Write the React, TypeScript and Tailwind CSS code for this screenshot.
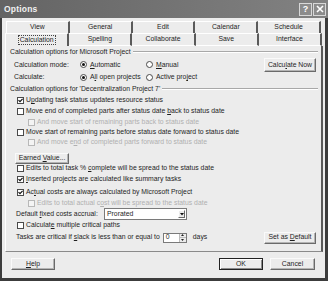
import React from "react";

const Check = ({ on, disabled }: { on?: boolean; disabled?: boolean }) => (
  <div
    className={`w-[7px] h-[7px] shrink-0 border flex items-center justify-center ${
      disabled ? "border-[#b8b8b8] bg-[#f4f4f4]" : "border-[#4a4a4a] bg-white"
    }`}
  >
    {on && (
      <svg width="5" height="5" viewBox="0 0 5 5">
        <path d="M0.5 2.2 L2 3.7 L4.6 0.8" stroke="#111" strokeWidth="1.2" fill="none" />
      </svg>
    )}
  </div>
);

const Radio = ({ on }: { on?: boolean }) => (
  <div className="w-[7px] h-[7px] shrink-0 rounded-full border border-[#4a4a4a] bg-white flex items-center justify-center">
    {on && <div className="w-[3px] h-[3px] rounded-full bg-[#111]" />}
  </div>
);

const Btn = ({
  children,
  className = "",
  def,
}: {
  children: React.ReactNode;
  className?: string;
  def?: boolean;
}) => (
  <div
    className={`flex items-center justify-center bg-[#ececec] ${
      def
        ? "border border-[#222] shadow-[inset_1px_1px_0_#fff,inset_-1px_-1px_0_#8a8a8a]"
        : "border border-t-[#fafafa] border-l-[#fafafa] border-b-[#6a6a6a] border-r-[#6a6a6a] shadow-[inset_-1px_-1px_0_#b4b4b4]"
    } ${className}`}
  >
    <span className="whitespace-nowrap">{children}</span>
  </div>
);

const CbRow = ({
  h,
  on,
  disabled,
  indent,
  children,
}: {
  h: string;
  on?: boolean;
  disabled?: boolean;
  indent?: boolean;
  children: React.ReactNode;
}) => (
  <div className={`flex items-center gap-[2px] ${h} ${indent ? "pl-[22px]" : "pl-[11px]"}`}>
    <Check on={on} disabled={disabled} />
    <span className={`whitespace-nowrap ${disabled ? "text-[#b0b0b0]" : ""}`}>{children}</span>
  </div>
);

const Header = ({ h, children }: { h: string; children: React.ReactNode }) => (
  <div className={`flex items-center ${h} pl-[4px] pr-[3px]`}>
    <span className="whitespace-nowrap">{children}</span>
    <div className="flex-1 ml-[2px] border-t border-t-[#a8a8a8] border-b border-b-white" />
  </div>
);

const Tab = ({ children, first }: { children: React.ReactNode; first?: boolean }) => (
  <div
    className={`flex-1 flex items-center justify-center border-t border-t-white border-r-2 border-r-[#5a5a5a] ${
      first ? "border-l border-l-white" : ""
    }`}
  >
    {children}
  </div>
);

const Tab2 = ({ children }: { children: React.ReactNode }) => (
  <div className="flex-1 flex items-center justify-center border-t border-t-white border-b border-b-white border-r-2 border-r-[#5a5a5a]">
    {children}
  </div>
);

export default function App() {
  return (
    <div className="w-[328px] h-[281px] flex flex-col bg-[#3c3c3c] font-['Liberation_Sans',Arial,sans-serif] text-[6.85px] text-[#1e1e1e] overflow-hidden">
      {/* Title bar */}
      <div className="h-[18px] shrink-0 flex items-center bg-gradient-to-r from-[#646464] to-[#828282] pl-[4px] pr-[2px]">
        <span className="text-[8.5px] font-bold text-[#f2f2f2] tracking-[0.2px]">Options</span>
        <div className="flex-1" />
        <div className="flex gap-[1px]">
          <div className="w-[13px] h-[13px] border border-[#d8d8d8] bg-[#8c8c8c] flex items-center justify-center text-white text-[9px] font-bold leading-none">
            ?
          </div>
          <div className="w-[13px] h-[13px] border border-[#d8d8d8] bg-[#8c8c8c] flex items-center justify-center">
            <svg width="8" height="8" viewBox="0 0 8 8">
              <path d="M1 1 L7 7 M7 1 L1 7" stroke="#fff" strokeWidth="1.6" />
            </svg>
          </div>
        </div>
      </div>

      {/* Body */}
      <div className="flex-1 flex flex-col bg-[#ececec] ml-[2px] mr-[3px] mb-[3px]">
        {/* Tabs */}
        <div className="mt-[3px] ml-[4px] mr-[4px] h-[12px] flex">
          <Tab first>View</Tab>
          <Tab>General</Tab>
          <Tab>Edit</Tab>
          <Tab>Calendar</Tab>
          <Tab>Schedule</Tab>
        </div>
        <div className="ml-[3px] mr-[3px] h-[13px] flex">
          <div className="flex-1 flex items-center justify-center border-t border-t-white border-l border-l-white border-r-2 border-r-[#5a5a5a]">
            <span className="border border-dotted border-[#444] px-[1px] leading-[8px]">Calculation</span>
          </div>
          <Tab2>Spelling</Tab2>
          <Tab2>Collaborate</Tab2>
          <Tab2>Save</Tab2>
          <Tab2>Interface</Tab2>
        </div>

        {/* Panel */}
        <div className="ml-[3px] mr-[2px] h-[206px] flex flex-col border-l border-l-white border-r-2 border-r-[#5a5a5a] border-b border-b-[#8a8a8a]">
          <Header h="h-[12px]">Calculation options for Microsoft Project</Header>
          <div className="h-[14px] flex items-center pl-[8px] pr-[5px]">
            <span className="w-[66px]">Calculation mode:</span>
            <div className="w-[66px] flex items-center gap-[3px]">
              <Radio on />
              <span>
                <u>A</u>utomatic
              </span>
            </div>
            <div className="flex items-center gap-[3px]">
              <Radio />
              <span>
                <u>M</u>anual
              </span>
            </div>
            <div className="flex-1" />
            <Btn className="w-[52px] h-[14px]">
              Calcu<u>l</u>ate Now
            </Btn>
          </div>
          <div className="h-[11px] flex items-center pl-[8px]">
            <span className="w-[66px]">Calculate:</span>
            <div className="w-[66px] flex items-center gap-[3px]">
              <Radio on />
              <span>
                A<u>l</u>l open projects
              </span>
            </div>
            <div className="flex items-center gap-[3px]">
              <Radio />
              <span>
                Active pro<u>j</u>ect
              </span>
            </div>
          </div>
          <Header h="h-[12px]">Calculation options for 'Decentralization Project 7'</Header>
          <CbRow h="h-[11px]" on>
            U<u>p</u>dating task status updates resource status
          </CbRow>
          <CbRow h="h-[11px]">
            Move end of completed parts after status date <u>b</u>ack to status date
          </CbRow>
          <CbRow h="h-[10px]" indent disabled>
            And move start of remaining parts back to status date
          </CbRow>
          <CbRow h="h-[10px]">Move start of remaining parts before status date forward to status date</CbRow>
          <CbRow h="h-[11px]" indent disabled>
            And move e<u>n</u>d of completed parts forward to status date
          </CbRow>
          <div className="h-[16px] pt-[4px] flex items-center pl-[9px]">
            <Btn className="w-[54px] h-[11px]">
              Earned <u>V</u>alue...
            </Btn>
          </div>
          <CbRow h="h-[9px]">
            Edits to total task % <u>c</u>omplete will be spread to the status date
          </CbRow>
          <CbRow h="h-[13px]" on>
            <u>I</u>nserted projects are calculated like summary tasks
          </CbRow>
          <CbRow h="h-[12px]" on>
            Ac<u>t</u>ual costs are always calculated by Microsoft Project
          </CbRow>
          <CbRow h="h-[10px]" indent disabled>
            Edits to total actual c<u>o</u>st will be spread to the status date
          </CbRow>
          <div className="h-[12px] flex items-center pl-[10px]">
            <span className="w-[88px] whitespace-nowrap">
              Default <u>f</u>ixed costs accrual:
            </span>
            <div className="w-[83px] h-[12px] bg-white border border-[#7a7a7a] flex items-center pl-[2px] pr-[1px]">
              <span className="flex-1">Prorated</span>
              <div className="w-[7px] h-[8px] bg-[#ececec] border border-t-white border-l-white border-b-[#6a6a6a] border-r-[#6a6a6a] flex items-center justify-center">
                <svg width="4" height="3" viewBox="0 0 4 3">
                  <path d="M0 0 H4 L2 2.5 Z" fill="#111" />
                </svg>
              </div>
            </div>
          </div>
          <CbRow h="h-[11px]">
            Calculat<u>e</u> multiple critical paths
          </CbRow>
          <div className="h-[13px] flex items-center pl-[10px] pr-[5px]">
            <span className="whitespace-nowrap">
              Tasks are critical if <u>s</u>lack is less than or equal to
            </span>
            <div className="ml-[3px] w-[24px] h-[10px] bg-white border border-[#7a7a7a] flex items-center">
              <span className="flex-1 pl-[2px]">0</span>
              <div className="w-[7px] h-full flex flex-col border-l border-[#bbb] bg-[#ececec]">
                <div className="flex-1 flex items-center justify-center border-b border-[#bbb]">
                  <svg width="3" height="2" viewBox="0 0 3 2">
                    <path d="M0 2 H3 L1.5 0 Z" fill="#222" />
                  </svg>
                </div>
                <div className="flex-1 flex items-center justify-center">
                  <svg width="3" height="2" viewBox="0 0 3 2">
                    <path d="M0 0 H3 L1.5 2 Z" fill="#222" />
                  </svg>
                </div>
              </div>
            </div>
            <span className="ml-[6px]">days</span>
            <div className="flex-1" />
            <Btn className="w-[52px] h-[12px]">
              Set as <u>D</u>efault
            </Btn>
          </div>
          <div className="flex-1" />
        </div>

        {/* Footer */}
        <div className="flex-1 flex items-start pt-[6px] pl-[9px] pr-[10px]">
          <Btn className="w-[44px] h-[12px]">
            <u>H</u>elp
          </Btn>
          <div className="flex-1" />
          <Btn def className="w-[44px] h-[12px]">
            OK
          </Btn>
          <Btn className="w-[45px] h-[12px] ml-[7px]">Cancel</Btn>
        </div>
      </div>
    </div>
  );
}
